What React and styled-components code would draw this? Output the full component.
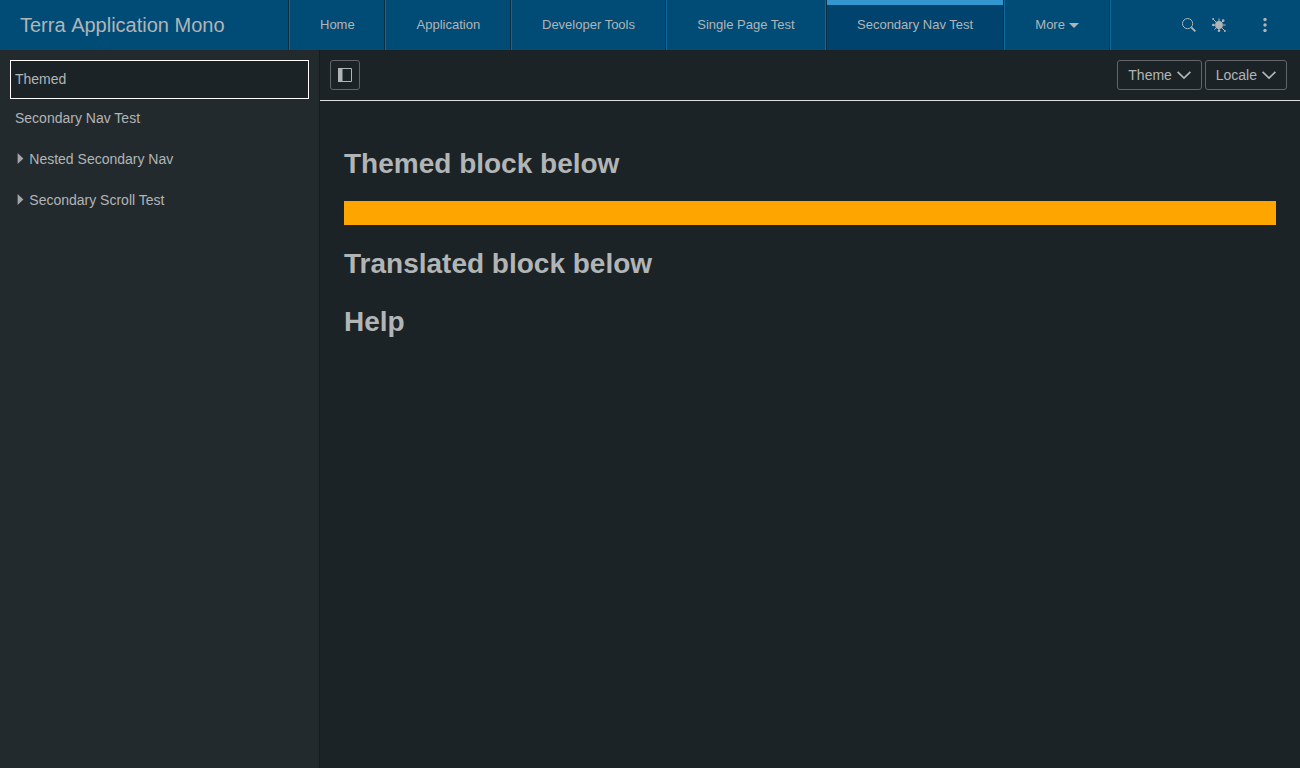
import React from 'react';
import styled, { createGlobalStyle } from 'styled-components';

const GlobalStyle = createGlobalStyle`
  *, *::before, *::after { box-sizing: border-box; }
  body {
    margin: 0;
    background: #1c2326;
    color: #b2b5b6;
    font-family: "Liberation Sans", Arial, sans-serif;
    font-size: 14px;
  }
`;

const Page = styled.div`
  display: flex;
  flex-direction: column;
  height: 100vh;
  overflow: hidden;
`;

const Header = styled.header`
  display: flex;
  flex: none;
  height: 50px;
  background: #004c76;
`;

const AppTitle = styled.div`
  width: 289px;
  padding-left: 20px;
  border-right: 1px solid #0d2e40;
  font-size: 20px;
  line-height: 50px;
  white-space: nowrap;
`;

const TitleLead = styled.span`
  margin-right: 1.1px;
`;

const TabList = styled.nav`
  display: flex;
  border-right: 1px solid #0f6a9c;
`;

const Tab = styled.div`
  display: flex;
  align-items: center;
  width: ${(p) => p.$width}px;
  padding-left: ${(p) => p.$inset || 30}px;
  border-left: 1px solid ${(p) => (p.$active ? '#0d2e40' : '#0f6a9c')};
  border-right: 1px solid ${(p) => (p.$beforeActive ? '#0f6a9c' : '#0d2e40')};
  background: ${(p) => (p.$active ? 'linear-gradient(#3496cf 5px, #00436e 5px)' : 'none')};
  font-size: 13px;
  line-height: 50px;
  white-space: nowrap;
`;

const Caret = styled.svg`
  margin-left: 4px;
`;

const Utilities = styled.div`
  display: flex;
  align-items: center;
  margin-left: auto;
  padding-right: 28px;
`;

const UtilityIcon = styled.svg`
  display: block;
  width: 14px;
  height: 14px;
  margin-left: ${(p) => p.$gap || 0}px;
`;

const Body = styled.div`
  display: flex;
  flex: 1;
  min-height: 0;
`;

const Sidebar = styled.aside`
  flex: none;
  width: 320px;
  padding: 10px 10px 0;
  border-right: 1px solid #161b1d;
  background: #232a2d;
`;

const SideItem = styled.div`
  display: flex;
  align-items: center;
  height: ${(p) => p.$height}px;
  padding: 0 4px 2px;
  border: 1px solid ${(p) => (p.$selected ? '#fff' : 'transparent')};
  background: ${(p) => (p.$selected ? '#1c2326' : 'none')};
`;

const Disclosure = styled.svg`
  margin: 0 5.3px 1px 2px;
  color: #a3a5a6;
`;

const Main = styled.main`
  flex: 1;
  min-width: 0;
`;

const Toolbar = styled.div`
  display: flex;
  align-items: center;
  gap: 3px;
  height: 51px;
  padding: 0 13px 0 10px;
  border-bottom: 1px solid #dcdddd;
`;

const Button = styled.button`
  display: flex;
  align-items: center;
  height: 30px;
  width: ${(p) => p.$width}px;
  padding: 0 0 0 ${(p) => p.$inset}px;
  border: 1px solid #606669;
  border-radius: 3px;
  background: none;
  color: inherit;
  font: inherit;
  gap: 5px;
`;

const Spacer = styled.div`
  flex: 1;
`;

const Content = styled.section`
  padding: 47px 24px 0;
`;

const Heading = styled.h1`
  margin: 0 0 ${(p) => p.$after || 0}px;
  font-size: 28px;
  line-height: 32px;
  font-weight: bold;
`;

const ThemedBlock = styled.div`
  height: 24px;
  margin-bottom: 23px;
  background: #ffa500;
`;

const tabs = [
  { label: 'Home', width: 96 },
  { label: 'Application', width: 126, inset: 30.6 },
  { label: 'Developer Tools', width: 155 },
  { label: 'Single Page Test', width: 160, inset: 30.3, beforeActive: true },
  { label: 'Secondary Nav Test', width: 178, active: true },
  { label: 'More', width: 106, inset: 30.3, menu: true },
];

const sideItems = [
  { label: 'Themed', height: 39, selected: true },
  { label: 'Secondary Nav Test', height: 39 },
  { label: 'Nested Secondary Nav', height: 43, nested: true },
  { label: 'Secondary Scroll Test', height: 39, nested: true },
];

const Chevron = () => (
  <svg width="14" height="14" viewBox="0 0 14 14">
    <path d="M0.6 3.9 7 10.1 13.4 3.9" fill="none" stroke="currentColor" strokeWidth="1.7" />
  </svg>
);

export default function App() {
  return (
    <Page>
      <GlobalStyle />
      <Header>
        <AppTitle>
          <TitleLead>Terra</TitleLead> Application Mono
        </AppTitle>
        <TabList>
          {tabs.map((t) => (
            <Tab
              key={t.label}
              $width={t.width}
              $inset={t.inset}
              $active={t.active}
              $beforeActive={t.beforeActive}
            >
              {t.label}
              {t.menu && (
                <Caret width="10" height="5" viewBox="0 0 10 5">
                  <path d="M0 0h10L5 5z" fill="currentColor" />
                </Caret>
              )}
            </Tab>
          ))}
        </TabList>
        <Utilities>
          <UtilityIcon viewBox="0 0 14 14" fill="none" stroke="currentColor">
            <circle cx="5.6" cy="5.6" r="5.1" />
            <path d="M9.3 9.3 13.4 13.4" strokeWidth="1.8" />
          </UtilityIcon>
          <UtilityIcon $gap={16} viewBox="0 0 14 14" stroke="currentColor" fill="currentColor">
            <circle cx="7" cy="7" r="3.9" stroke="none" />
            <path
              d="M7 0.4v3M7 11v2M1 7h2M11 7h2.6M1 1l3.5 3.5M11 3 9.5 4.5M9.5 9.5l3.5 3.5M4.5 9.5 2.4 11.6"
              fill="none"
              strokeWidth="1"
            />
            <circle cx="11.2" cy="2.6" r="1.3" stroke="none" />
            <circle cx="7" cy="12.7" r="1.3" stroke="none" />
            <circle cx="1.3" cy="7" r="1.3" stroke="none" />
            <circle cx="1.1" cy="1.1" r="1" stroke="none" />
            <circle cx="12.9" cy="12.9" r="1" stroke="none" />
          </UtilityIcon>
          <UtilityIcon $gap={32} viewBox="0 0 14 14" fill="currentColor">
            <circle cx="7" cy="1.6" r="1.7" />
            <circle cx="7" cy="7" r="1.7" />
            <circle cx="7" cy="12.4" r="1.7" />
          </UtilityIcon>
        </Utilities>
      </Header>
      <Body>
        <Sidebar>
          {sideItems.map((s) => (
            <SideItem key={s.label} $height={s.height} $selected={s.selected}>
              {s.nested && (
                <Disclosure width="7" height="11" viewBox="0 0 7 11">
                  <path d="M0.6 0 6.4 5.5 0.6 11z" fill="currentColor" />
                </Disclosure>
              )}
              {s.label}
            </SideItem>
          ))}
        </Sidebar>
        <Main>
          <Toolbar>
            <Button $width={30} $inset={7} aria-label="Toggle navigation">
              <svg width="14" height="14" viewBox="0 0 14 14">
                <path d="M0.5 0.5h13v13h-13z" fill="none" stroke="currentColor" />
                <path d="M0 0h4.5v14H0z" fill="currentColor" />
              </svg>
            </Button>
            <Spacer />
            <Button $width={85} $inset={10.3}>
              Theme
              <Chevron />
            </Button>
            <Button $width={82} $inset={9.7}>
              Locale
              <Chevron />
            </Button>
          </Toolbar>
          <Content>
            <Heading $after={21}>Themed block below</Heading>
            <ThemedBlock />
            <Heading $after={26}>Translated block below</Heading>
            <Heading>Help</Heading>
          </Content>
        </Main>
      </Body>
    </Page>
  );
}
